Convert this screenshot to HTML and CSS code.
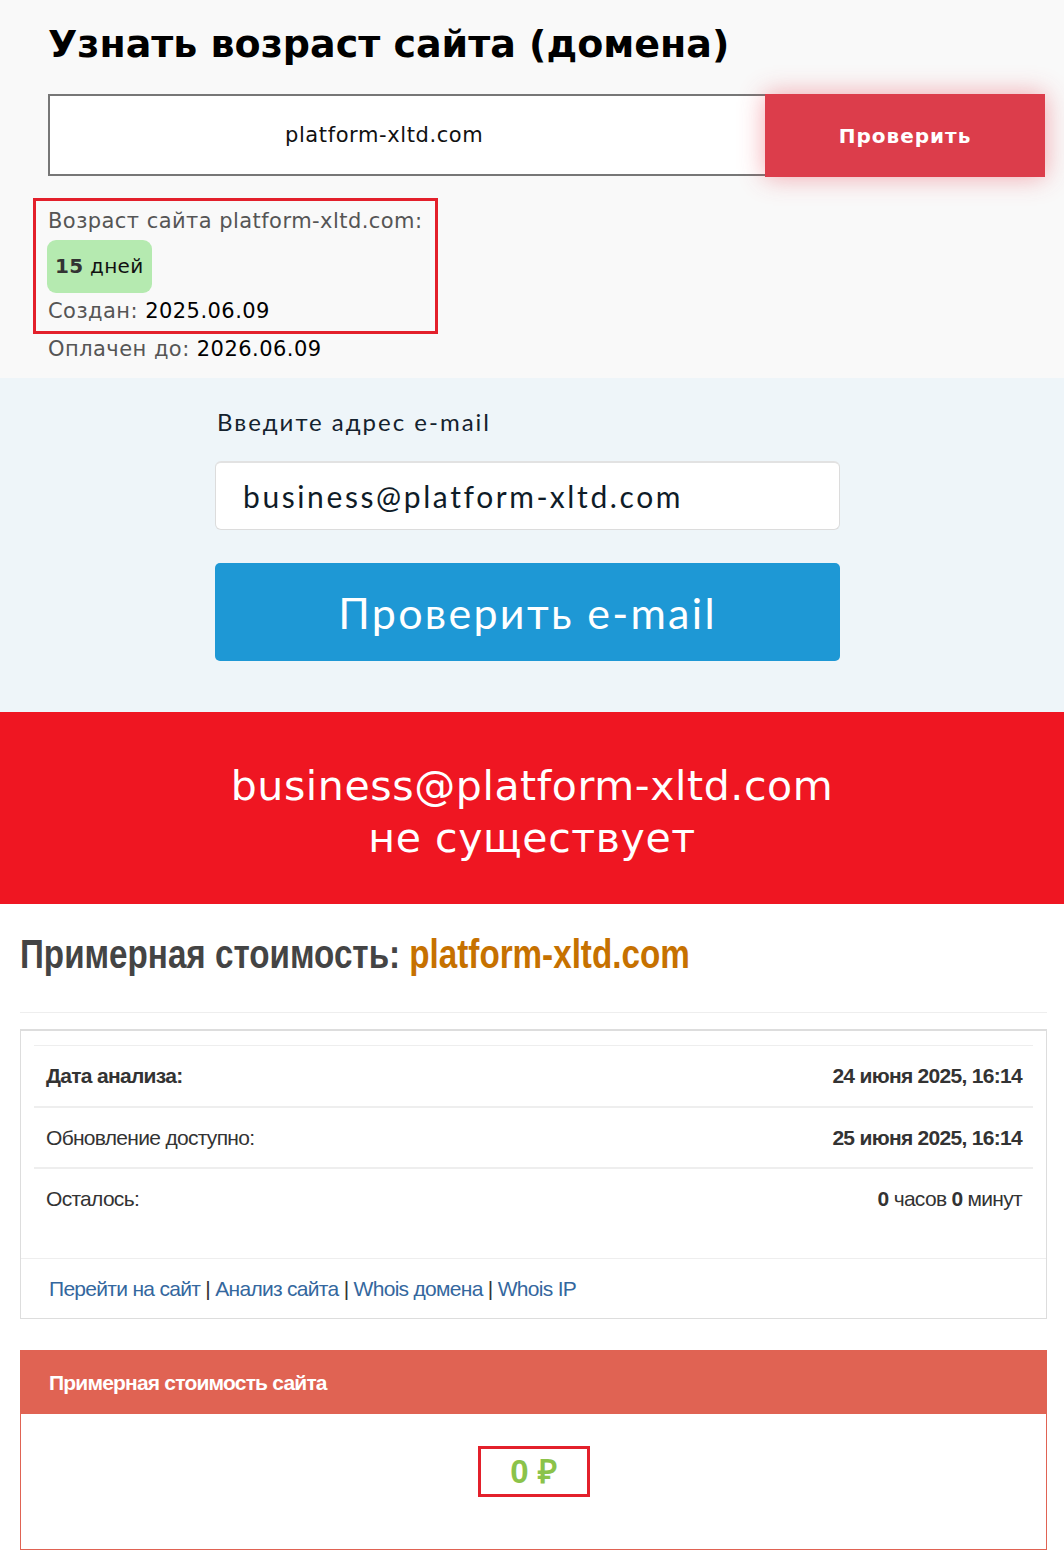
FILE: index.html
```html
<!DOCTYPE html>
<html lang="ru">
<head>
<meta charset="utf-8">
<title>Возраст сайта</title>
<link rel="stylesheet" href="styles.css">
</head>
<body>
<section class="age">
  <h1 class="age-title">Узнать возраст сайта (домена)</h1>
  <form class="age-form">
    <div class="age-input">platform-xltd.com</div>
    <button class="age-btn" type="button">Проверить</button>
  </form>
  <div class="age-result">
    <div class="age-line">Возраст сайта platform-xltd.com:</div>
    <div class="age-badge"><b>15</b> дней</div>
    <div class="age-line">Создан: <span class="val">2025.06.09</span></div>
  </div>
  <div class="age-line paid">Оплачен до: <span class="val">2026.06.09</span></div>
</section>

<section class="mail">
  <div class="mail-inner">
    <label class="mail-label">Введите адрес e-mail</label>
    <div class="mail-input">business@platform-xltd.com</div>
    <button class="mail-btn" type="button">Проверить e-mail</button>
  </div>
</section>

<section class="notice">
  <p>business@platform-xltd.com<br>не существует</p>
</section>

<section class="cost">
  <h2 class="cost-title"><span class="cost-title-text">Примерная стоимость: <span class="dom">platform-xltd.com</span></span></h2>
  <hr class="cost-hr">
  <div class="panel">
    <div class="panel-body">
      <div class="row"><span class="lbl strong">Дата анализа:</span><span class="strong">24 июня 2025, 16:14</span></div>
      <div class="row"><span class="lbl">Обновление доступно:</span><span class="strong">25 июня 2025, 16:14</span></div>
      <div class="row"><span class="lbl">Осталось:</span><span><b>0</b> часов <b>0</b> минут</span></div>
    </div>
    <div class="panel-foot">
      <a href="#">Перейти на сайт</a> | <a href="#">Анализ сайта</a> | <a href="#">Whois домена</a> | <a href="#">Whois IP</a>
    </div>
  </div>
  <div class="price">
    <div class="price-head">Примерная стоимость сайта</div>
    <div class="price-body"><span class="price-val">0 ₽</span></div>
  </div>
</section>
</body>
</html>
```

FILE: styles.css
```css
* { box-sizing: border-box; }
body {
  margin: 0;
  width: 1064px;
  font-family: "DejaVu Sans", sans-serif;
  background: #fff;
}

/* ---- age section ---- */
.age {
  background: #f9f9f9;
  padding: 18px 0 14px 48px;
  height: 378px;
}
.age-title {
  margin: 0;
  font-family: "DejaVu Sans", sans-serif;
  font-weight: 700;
  font-size: 38px;
  line-height: 52px;
  color: #000;
}
.age-form {
  display: flex;
  margin-top: 24px;
  width: 997px;
  height: 83px;
}
.age-input {
  width: 717px;
  height: 82px;
  border: 2px solid #777;
  border-right: none;
  background: #fff;
  display: flex;
  align-items: center;
  padding-left: 235px;
  font-size: 21px;
  letter-spacing: 0.6px;
  color: #111;
}
.age-btn {
  width: 280px;
  height: 83px;
  border: none;
  background: #dc3d4b;
  color: #fff;
  font-family: "DejaVu Sans", sans-serif;
  font-weight: 700;
  font-size: 20px;
  letter-spacing: 1px;
  box-shadow: 0 0 24px rgba(230, 60, 75, 0.45);
}
.age-result {
  margin: 21px 0 0 -15px;
  width: 405px;
  border: 3px solid #e3202b;
  padding: 6px 2px 6px 12px;
}
.age-line {
  font-size: 21px;
  line-height: 28px;
  letter-spacing: 0.45px;
  color: #555;
  white-space: nowrap;
}
.val { color: #000; }
.age-badge {
  display: inline-block;
  margin: 5px 0 4px -1px;
  background: #b5eab0;
  border-radius: 9px;
  padding: 0 8px;
  height: 53px;
  line-height: 53px;
  font-size: 20px;
  letter-spacing: 0.3px;
  color: #111;
}
.age-badge b { color: #333; }
.paid { margin-top: 1px; }

/* ---- mail section ---- */
.mail {
  background: #eef5f9;
  height: 334px;
  padding: 28px 0 0 215px;
}
.mail-inner { width: 625px; display: flex; flex-direction: column; }
.mail-label {
  font-family: "Lato", sans-serif;
  font-size: 24px;
  line-height: 32px;
  letter-spacing: 2px;
  color: #14222e;
  padding-left: 2px;
}
.mail-input {
  margin-top: 23px;
  height: 69px;
  background: #fff;
  border: 1px solid #dcdcdc;
  border-top: 2px solid #e2e2e2;
  border-radius: 6px;
  display: flex;
  align-items: center;
  padding-left: 27px;
  font-family: "Lato", sans-serif;
  font-size: 30px;
  letter-spacing: 2.6px;
  color: #0f1c28;
}
.mail-btn {
  margin-top: 33px;
  height: 98px;
  border: none;
  border-radius: 5px;
  background: #1e98d5;
  color: #fff;
  font-family: "Lato", sans-serif;
  font-size: 43px;
  letter-spacing: 2.3px;
}

/* ---- notice ---- */
.notice {
  background: #ef1622;
  height: 192px;
  display: flex;
  align-items: center;
  justify-content: center;
  padding-top: 8px;
}
.notice p {
  margin: 0;
  text-align: center;
  color: #fff;
  font-family: "DejaVu Sans", sans-serif;
  font-size: 41px;
  letter-spacing: 0.6px;
  line-height: 52px;
}

/* ---- cost ---- */
.cost {
  padding: 28px 17px 14px 20px;
  font-family: "Liberation Sans", Arial, sans-serif;
}
.cost-title {
  margin: 0;
  font-size: 40px;
  line-height: 44px;
  font-weight: 700;
  color: #444;
  white-space: nowrap;
}
.cost-title-text {
  display: inline-block;
  transform: scaleX(0.83);
  transform-origin: left center;
}
.dom { color: #c67100; }
.cost-hr {
  margin: 36px 0 16px;
  border: none;
  border-top: 1px solid #eee;
}
.panel {
  border: 1px solid #ddd;
  border-top: 2px solid #ddd;
  background: #fff;
}
.panel-body {
  padding: 14px 13px 30px;
}
.row {
  display: flex;
  justify-content: space-between;
  border-top: 2px solid #eee;
  height: 61px;
  align-items: center;
  padding: 0 11px 0 12px;
  font-size: 21px;
  letter-spacing: -0.7px;
  color: #333;
}
.row:first-child { border-top-width: 1px; }
.strong, .row b { font-weight: 700; }
.panel-foot {
  border-top: 1px solid #eee;
  height: 60px;
  display: flex;
  align-items: center;
  padding-left: 28px;
  font-size: 21px;
  letter-spacing: -0.7px;
  color: #333;
  white-space: pre;
}
.panel-foot a { color: #34679e; text-decoration: none; }
.price {
  margin-top: 31px;
  border: 1px solid #e06353;
  background: #fff;
}
.price-head {
  background: #e06353;
  color: #fff;
  font-weight: 700;
  font-size: 21px;
  letter-spacing: -0.8px;
  height: 63px;
  display: flex;
  align-items: center;
  padding-left: 28px;
}
.price-body {
  height: 135px;
  display: flex;
  justify-content: center;
  padding-top: 32px;
  align-items: flex-start;
}
.price-val {
  display: inline-block;
  border: 3px solid #e3202b;
  width: 112px;
  height: 51px;
  text-align: center;
  line-height: 45px;
  font-size: 33px;
  font-weight: 700;
  color: #8bc34a;
}
```
